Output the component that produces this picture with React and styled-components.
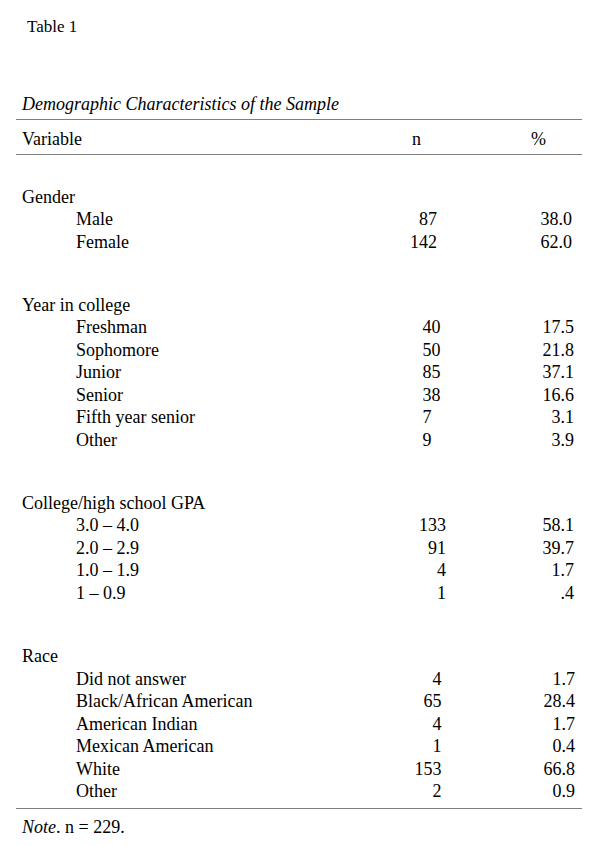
import React from 'react';
import styled, { createGlobalStyle } from 'styled-components';

const GlobalStyle = createGlobalStyle`
  html, body {
    margin: 0;
    padding: 0;
    background: #fff;
  }
  body {
    font-family: "Liberation Serif", "Times New Roman", serif;
    color: #000;
  }
`;

const Page = styled.div`
  width: 566px;
  padding: 15.7px 19px 0 16px;
`;

const TableLabel = styled.div`
  font-size: 17px;
  line-height: 22.5px;
  padding-left: 11px;
`;

const Title = styled.div`
  font-size: 18px;
  line-height: 22.5px;
  font-style: italic;
  padding-left: 6px;
  margin-top: 54.5px;
`;

const Table = styled.div`
  margin-top: 3.8px;
  border-top: 1px solid #7f7f7f;
  border-bottom: 1px solid #7f7f7f;
  font-size: 18px;
  line-height: 22.5px;
`;

const Row = styled.div`
  display: grid;
  grid-template-columns: 384px 72px 110px;
`;

const HeadRow = styled(Row)`
  padding: 7.7px 0 3.8px;
  border-bottom: 1px solid #7f7f7f;
`;

const Body = styled.div`
  display: flex;
  flex-direction: column;
  gap: 40.6px;
  padding: 30.8px 0 5.2px;
`;

const Group = styled.div`
  display: flex;
  flex-direction: column;
`;

const Label = styled.div`
  padding-left: ${(p) => (p.$indent ? 60 : 6)}px;
  white-space: nowrap;
`;

const HeadCell = styled.div`
  padding-left: ${(p) => p.$pad}px;
`;

const NCell = styled.div`
  text-align: ${(p) => p.$align};
  padding-left: ${(p) => p.$padLeft || 0}px;
  padding-right: ${(p) => p.$padRight || 0}px;
`;

const PctCell = styled.div`
  text-align: right;
  padding-right: ${(p) => p.$padRight}px;
`;

const Note = styled.div`
  font-size: 18px;
  line-height: 22.5px;
  padding-left: 6px;
  margin-top: 7.3px;

  em {
    font-style: italic;
  }
`;

const groups = [
  {
    title: 'Gender',
    n: { align: 'right', padRight: 35 },
    pct: 10,
    rows: [
      ['Male', '87', '38.0'],
      ['Female', '142', '62.0'],
    ],
  },
  {
    title: 'Year in college',
    n: { align: 'left', padLeft: 22.5 },
    pct: 8,
    rows: [
      ['Freshman', '40', '17.5'],
      ['Sophomore', '50', '21.8'],
      ['Junior', '85', '37.1'],
      ['Senior', '38', '16.6'],
      ['Fifth year senior', '7', '3.1'],
      ['Other', '9', '3.9'],
    ],
  },
  {
    title: 'College/high school GPA',
    n: { align: 'right', padRight: 26 },
    pct: 8,
    rows: [
      ['3.0 – 4.0', '133', '58.1'],
      ['2.0 – 2.9', '91', '39.7'],
      ['1.0 – 1.9', '4', '1.7'],
      ['1 – 0.9', '1', '.4'],
    ],
  },
  {
    title: 'Race',
    n: { align: 'right', padRight: 30.5 },
    pct: 7,
    rows: [
      ['Did not answer', '4', '1.7'],
      ['Black/African American', '65', '28.4'],
      ['American Indian', '4', '1.7'],
      ['Mexican American', '1', '0.4'],
      ['White', '153', '66.8'],
      ['Other', '2', '0.9'],
    ],
  },
];

export default function App() {
  return (
    <>
      <GlobalStyle />
      <Page>
        <TableLabel>Table 1</TableLabel>
        <Title>Demographic Characteristics of the Sample</Title>
        <Table>
          <HeadRow>
            <Label>Variable</Label>
            <HeadCell $pad={12}>n</HeadCell>
            <HeadCell $pad={59}>%</HeadCell>
          </HeadRow>
          <Body>
            {groups.map((g) => (
              <Group key={g.title}>
                <Row>
                  <Label>{g.title}</Label>
                </Row>
                {g.rows.map(([label, n, pct]) => (
                  <Row key={label}>
                    <Label $indent>{label}</Label>
                    <NCell
                      $align={g.n.align}
                      $padLeft={g.n.padLeft}
                      $padRight={g.n.padRight}
                    >
                      {n}
                    </NCell>
                    <PctCell $padRight={g.pct}>{pct}</PctCell>
                  </Row>
                ))}
              </Group>
            ))}
          </Body>
        </Table>
        <Note>
          <em>Note</em>. n = 229.
        </Note>
      </Page>
    </>
  );
}
